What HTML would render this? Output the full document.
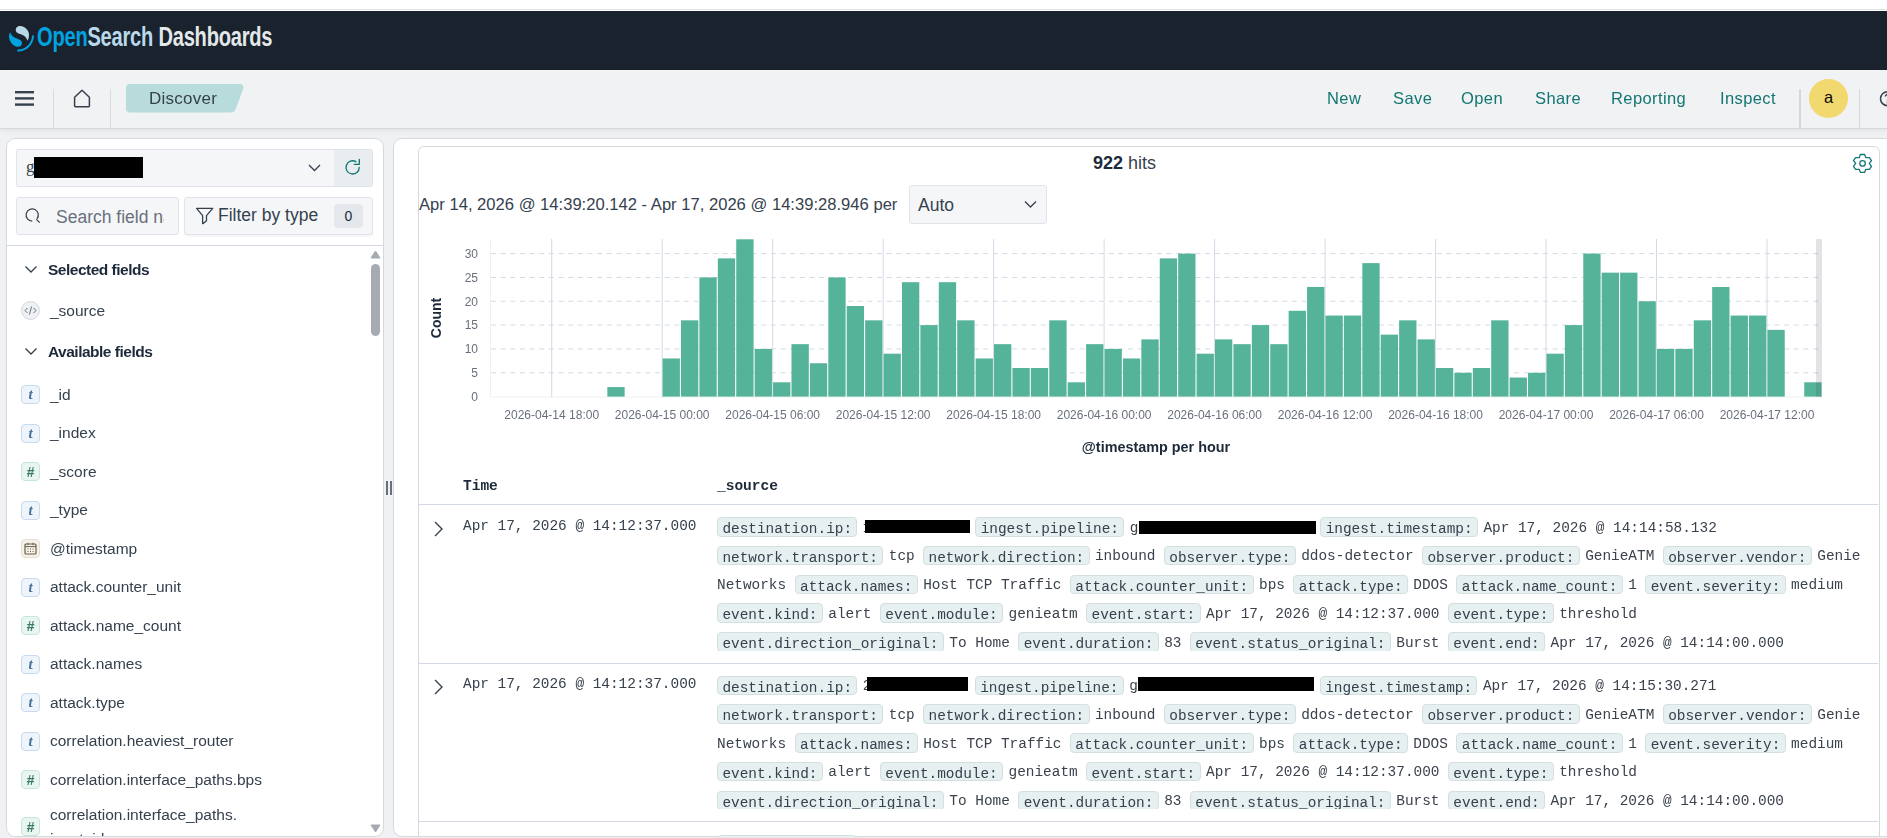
<!DOCTYPE html>
<html><head><meta charset="utf-8">
<style>
*{box-sizing:border-box;margin:0;padding:0}
html,body{width:1887px;height:838px;overflow:hidden;background:#f0f1f3;font-family:"Liberation Sans",sans-serif;color:#36414e}
.abs{position:absolute}
.gs{position:absolute;left:0;top:0;width:1887px;height:838px;will-change:transform;pointer-events:none}
#topstrip{left:0;top:0;width:1887px;height:11px;background:#fff;border-bottom:0}
#topline{left:0;top:9px;width:1887px;height:1px;background:#e3e4ea}
#hdr{left:0;top:11px;width:1887px;height:59px;background:#1a222d}
#nav{left:0;top:70px;width:1887px;height:58px;background:#f1f2f4;box-shadow:0 1px 0 #d5d9de,0 2px 5px rgba(55,70,90,.10)}
.sep{position:absolute;width:1px;background:#d8dce2}
.link{position:absolute;top:89px;font-size:16.5px;letter-spacing:0.4px;color:#137673;white-space:nowrap}
.panel{position:absolute;background:#fff;border:1px solid #d5d9de;border-radius:9px;overflow:hidden}
.inp{position:absolute;background:#f5f6f8;border:1px solid #e0e4ea;border-radius:3px}
.fld{position:absolute;left:50px;font-size:15.5px;color:#36414e;white-space:nowrap}
.tok{position:absolute;left:21px;width:19px;height:19px;border-radius:4px;border:1px solid;font-family:"Liberation Serif",serif;font-weight:bold;font-style:italic;font-size:15px;text-align:center;line-height:17.5px}
.tt{background:#eef4fb;border-color:#c9daee;color:#4a7194}
.tn{background:#e8f5f0;border-color:#c6e6da;color:#3d7a63}
.mono{font-family:"Liberation Mono",monospace}
.row{position:absolute;left:717px;height:28.75px;white-space:nowrap;font-family:"Liberation Mono",monospace;font-size:14.42px;color:#3b424c;line-height:19px}
.b{display:inline-block;background:#e6f0f0;border:1px solid #d5dfe0;border-radius:4px;padding:0 4.4px;height:19.5px;line-height:22.5px;margin-right:5.4px;color:#36414e}
.v{margin-right:8.45px;position:relative;top:-1.5px}
.red{display:inline-block;background:#000;height:13px;vertical-align:-1px}
</style></head><body>
<div class="abs" id="topstrip"></div>
<div class="abs" id="topline"></div>
<div class="abs" id="hdr">
  <svg class="abs" style="left:0;top:-11px" width="40" height="60" viewBox="0 0 40 60">
    <path d="M15.8 30.5C15.5 27.5 18 26 20 26.1C25 26.3 29.3 30.5 29 35.4C28.9 37.5 28.3 39.3 27.5 40.7C26.5 37.5 24.5 35.8 21.5 34.6C18.5 33.6 16 32.8 15.8 30.5Z" fill="#b9d9eb"/>
    <path d="M10.1 32.3C8.6 34.5 8.5 38.5 10.5 41.8C12.5 45 15 46.8 17.8 46.8C20.5 46.8 22.2 45 22 42.7C21.8 40.6 19.8 39.6 17.5 38.8C13.8 37.4 11 35.8 10.1 32.3Z" fill="#00a3e0"/>
    <path d="M33 36.2A15.5 15.5 0 0 1 18.2 50.6" stroke="#00a3e0" stroke-width="2" fill="none" stroke-linecap="round"/>
  </svg>
  <div class="abs" style="left:37px;top:10px;font-size:27.5px;font-weight:bold;white-space:nowrap;transform:scaleX(0.73);transform-origin:0 0;letter-spacing:-0.3px"><span style="color:#00a3e0">Open</span><span style="color:#b9d9eb">Search</span> <span style="color:#e3e8ea">Dashboards</span></div>
</div>
<div class="gs"><div class="abs" id="nav">
  <svg class="abs" style="left:15px;top:20px" width="20" height="16" viewBox="0 0 20 16"><rect x="0" y="1" width="19" height="2.4" fill="#36414e"/><rect x="0" y="7.2" width="19" height="2.4" fill="#36414e"/><rect x="0" y="13.4" width="19" height="2.4" fill="#36414e"/></svg>
  <div class="sep" style="left:53px;top:19px;height:39px"></div>
  <svg class="abs" style="left:73px;top:19px" width="18" height="19" viewBox="0 0 18 19"><path d="M1.6 8.2L9 1.2l7.4 7v8.8a0.8 0.8 0 0 1-0.8 0.8H2.4a0.8 0.8 0 0 1-0.8-0.8z" fill="none" stroke="#36414e" stroke-width="1.5" stroke-linejoin="round"/></svg>
  <div class="sep" style="left:110px;top:19px;height:39px"></div>
  <svg class="abs" style="left:126px;top:14px" width="119" height="29" viewBox="0 0 119 29"><path d="M4 0H114a3.5 3.5 0 0 1 3.3 4.6L110 24.5a6 6 0 0 1-5.6 4H4a4 4 0 0 1-4-4V4a4 4 0 0 1 4-4z" fill="#b8dcdc"/></svg>
  <div class="abs" style="left:149px;top:19px;font-size:17px;letter-spacing:0.25px;color:#36414e">Discover</div>
</div>
<div class="link" style="left:1327px">New</div>
<div class="link" style="left:1393px">Save</div>
<div class="link" style="left:1461px">Open</div>
<div class="link" style="left:1535px">Share</div>
<div class="link" style="left:1611px">Reporting</div>
<div class="link" style="left:1720px">Inspect</div>
</div>
<div class="sep" style="left:1799px;top:89px;height:39px;width:1.5px;background:#d4d7dc"></div>
<div class="abs" style="left:1809px;top:79px;width:39px;height:39px;border-radius:50%;background:#f1d86f;text-align:center;line-height:37px;font-size:16.5px;color:#0a0a0a">a</div>
<div class="sep" style="left:1858.5px;top:89px;height:39px;width:1.5px;background:#d4d7dc"></div>
<svg class="abs" style="left:1878px;top:89px" width="20" height="20" viewBox="0 0 20 20"><circle cx="9.5" cy="9.7" r="7" fill="none" stroke="#36414e" stroke-width="1.5"/><path d="M7.3 7.6a2.2 2.2 0 1 1 3.2 2c-0.7 0.4-1 0.8-1 1.5v0.6" fill="none" stroke="#36414e" stroke-width="1.4"/><circle cx="9.5" cy="13.6" r="0.9" fill="#36414e"/></svg>

<!-- left panel -->
<div class="panel" style="left:6px;top:138px;width:378px;height:699px"></div>
<div class="inp" style="left:16px;top:149px;width:318px;height:38px;border-right:0;border-radius:3px 0 0 3px"></div>
<div class="abs" style="left:334px;top:149px;width:39px;height:38px;background:#e9edf0;border:1px solid #e0e4ea;border-left:0;border-radius:0 3px 3px 0"></div>
<div class="abs" style="left:26px;top:157px;font-size:17px;color:#36414e;font-family:'Liberation Serif',serif">g</div>
<div class="abs" style="left:34px;top:157px;width:109px;height:21px;background:#000"></div>
<svg class="abs" style="left:308px;top:164px" width="13" height="8" viewBox="0 0 13 8"><path d="M1 1l5.5 5.5L12 1" fill="none" stroke="#36414e" stroke-width="1.3"/></svg>
<svg class="abs" style="left:340px;top:155px" width="26" height="26" viewBox="340 155 26 26"><path d="M359.2 167.4A6.6 6.6 0 1 1 355.9 161.7" fill="none" stroke="#137673" stroke-width="1.35" stroke-linecap="round"/><path d="M359.3 159.3V164.3H354.3" fill="none" stroke="#137673" stroke-width="1.35" stroke-linecap="round" stroke-linejoin="round"/></svg>
<div class="inp" style="left:16px;top:197px;width:163px;height:38px"></div>
<svg class="abs" style="left:20px;top:200px" width="30" height="30" viewBox="20 200 30 30"><path d="M36.9 218.9A6.1 6.1 0 1 0 32.3 221.1" fill="none" stroke="#36414e" stroke-width="1.25"/><path d="M36.4 219.4l3.3 3.2" stroke="#36414e" stroke-width="1.25"/></svg>
<div class="abs" style="left:56px;top:206.5px;width:108px;overflow:hidden;font-size:17.5px;color:#69707d;white-space:nowrap">Search field names</div>
<div class="inp" style="left:184px;top:197px;width:189px;height:38px;box-shadow:0 2px 2px rgba(0,0,0,.04)"></div>
<svg class="abs" style="left:190px;top:200px" width="30" height="30" viewBox="190 200 30 30"><path d="M196.6 208.4H212.7L206.5 215.6V220.8L203.2 223.6H202.6V215.6Z" fill="none" stroke="#36414e" stroke-width="1.3" stroke-linejoin="round"/></svg>
<div class="abs" style="left:218px;top:205px;font-size:17.5px;color:#36414e;white-space:nowrap">Filter by type</div>
<div class="abs" style="left:334px;top:204px;width:29px;height:24px;background:#e4e8ec;border-radius:4px;text-align:center;line-height:24px;font-size:14px;color:#1d2a3a">0</div>
<div class="abs" style="left:7px;top:245px;width:376px;height:1px;background:#d3dae6"></div>
<!-- scrollbar -->
<svg class="abs" style="left:370px;top:250px" width="11" height="9" viewBox="0 0 11 9"><path d="M5.5 1L10 8H1z" fill="#a6abb2" stroke="#a6abb2" stroke-width="1" stroke-linejoin="round"/></svg>
<div class="abs" style="left:371px;top:264px;width:9px;height:72px;border-radius:5px;background:#a6abb2"></div>
<svg class="abs" style="left:370px;top:824px" width="11" height="9" viewBox="0 0 11 9"><path d="M1 1H10L5.5 8z" fill="#a6abb2" stroke="#a6abb2" stroke-width="1" stroke-linejoin="round"/></svg>
<!-- selected fields -->
<div class="gs">
<svg class="abs" style="left:24px;top:265px" width="14" height="9" viewBox="0 0 14 9"><path d="M1.5 1.5l5.5 5.5 5.5-5.5" fill="none" stroke="#36414e" stroke-width="1.3"/></svg>
<div class="abs" style="left:48px;top:261px;font-size:15.5px;letter-spacing:-0.5px;font-weight:bold;color:#1d2a3a;white-space:nowrap">Selected fields</div>
<div class="abs" style="left:21px;top:301px;width:19px;height:19px;border-radius:50%;background:#eef0f3;border:1px solid #d3d7dd"></div>
<svg class="abs" style="left:24px;top:305px" width="13" height="11" viewBox="0 0 13 11"><path d="M3.5 3L1 5.5 3.5 8M9.5 3L12 5.5 9.5 8M7.6 1.5L5.4 9.5" fill="none" stroke="#69707d" stroke-width="1"/></svg>
<div class="fld" style="top:302px">_source</div>
<svg class="abs" style="left:24px;top:347px" width="14" height="9" viewBox="0 0 14 9"><path d="M1.5 1.5l5.5 5.5 5.5-5.5" fill="none" stroke="#36414e" stroke-width="1.3"/></svg>
<div class="abs" style="left:48px;top:342.5px;font-size:15.5px;letter-spacing:-0.5px;font-weight:bold;color:#1d2a3a;white-space:nowrap">Available fields</div>
<div class="tok tt" style="top:385.0px">t</div>
<div class="fld" style="top:385.7px">_id</div>
<div class="tok tt" style="top:423.5px">t</div>
<div class="fld" style="top:424.2px">_index</div>
<div class="tok tn" style="top:462.0px;font-family:'Liberation Sans';font-style:italic;font-size:14px;line-height:19px">#</div>
<div class="fld" style="top:462.7px">_score</div>
<div class="tok tt" style="top:500.5px">t</div>
<div class="fld" style="top:501.2px">_type</div>
<div class="abs" style="left:21px;top:539.0px;width:19px;height:19px;border-radius:4px;background:#f5f1e8;border:1px solid #e6dfcf"></div><svg class="abs" style="left:24px;top:542.0px" width="13" height="13" viewBox="0 0 13 13"><rect x="1" y="2" width="11" height="10" rx="1" fill="none" stroke="#6b5f4c" stroke-width="1.2"/><path d="M1 4.6h11M4 0.8v2.4M9 0.8v2.4M4 6.5v1M6.5 6.5v1M9 6.5v1M4 9v1M6.5 9v1M9 9v1" stroke="#6b5f4c" stroke-width="1"/></svg>
<div class="fld" style="top:539.7px">@timestamp</div>
<div class="tok tt" style="top:577.5px">t</div>
<div class="fld" style="top:578.2px">attack.counter_unit</div>
<div class="tok tn" style="top:616.0px;font-family:'Liberation Sans';font-style:italic;font-size:14px;line-height:19px">#</div>
<div class="fld" style="top:616.7px">attack.name_count</div>
<div class="tok tt" style="top:654.5px">t</div>
<div class="fld" style="top:655.2px">attack.names</div>
<div class="tok tt" style="top:693.0px">t</div>
<div class="fld" style="top:693.7px">attack.type</div>
<div class="tok tt" style="top:731.5px">t</div>
<div class="fld" style="top:732.2px">correlation.heaviest_router</div>
<div class="tok tn" style="top:770.0px;font-family:'Liberation Sans';font-style:italic;font-size:14px;line-height:19px">#</div>
<div class="fld" style="top:770.7px">correlation.interface_paths.bps</div>
<div class="tok tn" style="top:817.3px;font-family:'Liberation Sans';font-style:italic;font-size:14px;line-height:19px">#</div>
<div class="fld" style="top:805.6px">correlation.interface_paths.</div>
<div class="abs" style="left:7px;top:826px;width:360px;height:10px;overflow:hidden"><div class="fld" style="left:43px;top:3.5px">input_id</div></div>
</div>

<!-- resize handle -->
<div class="abs" style="left:386px;top:481px;width:1.6px;height:14px;background:#69707d"></div>
<div class="abs" style="left:390px;top:481px;width:1.6px;height:14px;background:#69707d"></div>

<!-- right panel -->
<div class="panel" style="left:393px;top:138px;width:1520px;height:699px">
  <div class="abs" style="left:24px;top:7px;width:1462px;height:720px;border:1px solid #d5d9de;border-radius:6px"></div>
</div>
<div class="abs" style="left:1093px;top:153px;font-size:18px;color:#36414e;white-space:nowrap"><b style="color:#1d2a3a">922</b> hits</div>
<svg class="abs" style="left:1848px;top:150px" width="28" height="28" viewBox="1848 150 28 28"><path d="M1860.4 154.5H1864.6L1865.8 157.6H1869.4L1871.5 160.6L1869.3 163.4L1871.5 166.3L1869.4 169.3H1865.8L1864.6 172.4H1860.4L1859.3 169.3H1855.6L1853.5 166.3L1855.7 163.4L1853.5 160.6L1855.6 157.6H1859.3Z" fill="none" stroke="#137673" stroke-width="1.3" stroke-linejoin="round"/><circle cx="1862.55" cy="163.4" r="2.75" fill="none" stroke="#137673" stroke-width="1.3"/></svg>
<div class="abs" style="left:419px;top:194.5px;font-size:16.6px;color:#36414e;white-space:nowrap">Apr 14, 2026 @ 14:39:20.142 - Apr 17, 2026 @ 14:39:28.946 per</div>
<div class="inp" style="left:909px;top:185px;width:138px;height:39px"></div>
<div class="abs" style="left:918px;top:195px;font-size:17.5px;color:#36414e">Auto</div>
<svg class="abs" style="left:1024px;top:200px" width="13" height="9" viewBox="0 0 13 9"><path d="M1 1.5l5.5 5.5L12 1.5" fill="none" stroke="#36414e" stroke-width="1.3"/></svg>

<!-- chart -->
<div class="gs">
<svg class="abs" style="left:0;top:0" width="1887" height="470" viewBox="0 0 1887 470" font-family="Liberation Sans" font-size="12" fill="#69707d">
<line x1="490.5" y1="239" x2="490.5" y2="397" stroke="#eef0f3" stroke-width="1"/>
<line x1="490" y1="397" x2="1822" y2="397" stroke="#eef0f3" stroke-width="1"/>
<text x="478" y="400.90" text-anchor="end">0</text>
<line x1="491" y1="372.77" x2="1822" y2="372.77" stroke="#d3dae6" stroke-width="1" stroke-dasharray="5 4.65"/>
<text x="478" y="377.07" text-anchor="end">5</text>
<line x1="491" y1="348.93" x2="1822" y2="348.93" stroke="#d3dae6" stroke-width="1" stroke-dasharray="5 4.65"/>
<text x="478" y="353.23" text-anchor="end">10</text>
<line x1="491" y1="325.10" x2="1822" y2="325.10" stroke="#d3dae6" stroke-width="1" stroke-dasharray="5 4.65"/>
<text x="478" y="329.40" text-anchor="end">15</text>
<line x1="491" y1="301.26" x2="1822" y2="301.26" stroke="#d3dae6" stroke-width="1" stroke-dasharray="5 4.65"/>
<text x="478" y="305.56" text-anchor="end">20</text>
<line x1="491" y1="277.43" x2="1822" y2="277.43" stroke="#d3dae6" stroke-width="1" stroke-dasharray="5 4.65"/>
<text x="478" y="281.73" text-anchor="end">25</text>
<line x1="491" y1="253.59" x2="1822" y2="253.59" stroke="#d3dae6" stroke-width="1" stroke-dasharray="5 4.65"/>
<text x="478" y="257.89" text-anchor="end">30</text>
<line x1="551.70" y1="239" x2="551.70" y2="397" stroke="#d3dae6" stroke-width="1"/>
<text x="551.70" y="418.5" text-anchor="middle">2026-04-14 18:00</text>
<line x1="662.18" y1="239" x2="662.18" y2="397" stroke="#d3dae6" stroke-width="1"/>
<text x="662.18" y="418.5" text-anchor="middle">2026-04-15 00:00</text>
<line x1="772.67" y1="239" x2="772.67" y2="397" stroke="#d3dae6" stroke-width="1"/>
<text x="772.67" y="418.5" text-anchor="middle">2026-04-15 06:00</text>
<line x1="883.15" y1="239" x2="883.15" y2="397" stroke="#d3dae6" stroke-width="1"/>
<text x="883.15" y="418.5" text-anchor="middle">2026-04-15 12:00</text>
<line x1="993.64" y1="239" x2="993.64" y2="397" stroke="#d3dae6" stroke-width="1"/>
<text x="993.64" y="418.5" text-anchor="middle">2026-04-15 18:00</text>
<line x1="1104.12" y1="239" x2="1104.12" y2="397" stroke="#d3dae6" stroke-width="1"/>
<text x="1104.12" y="418.5" text-anchor="middle">2026-04-16 00:00</text>
<line x1="1214.60" y1="239" x2="1214.60" y2="397" stroke="#d3dae6" stroke-width="1"/>
<text x="1214.60" y="418.5" text-anchor="middle">2026-04-16 06:00</text>
<line x1="1325.09" y1="239" x2="1325.09" y2="397" stroke="#d3dae6" stroke-width="1"/>
<text x="1325.09" y="418.5" text-anchor="middle">2026-04-16 12:00</text>
<line x1="1435.57" y1="239" x2="1435.57" y2="397" stroke="#d3dae6" stroke-width="1"/>
<text x="1435.57" y="418.5" text-anchor="middle">2026-04-16 18:00</text>
<line x1="1546.06" y1="239" x2="1546.06" y2="397" stroke="#d3dae6" stroke-width="1"/>
<text x="1546.06" y="418.5" text-anchor="middle">2026-04-17 00:00</text>
<line x1="1656.54" y1="239" x2="1656.54" y2="397" stroke="#d3dae6" stroke-width="1"/>
<text x="1656.54" y="418.5" text-anchor="middle">2026-04-17 06:00</text>
<line x1="1767.02" y1="239" x2="1767.02" y2="397" stroke="#d3dae6" stroke-width="1"/>
<text x="1767.02" y="418.5" text-anchor="middle">2026-04-17 12:00</text>
<g fill="#54b399">
<rect x="607.34" y="387.07" width="17.31" height="9.53"/>
<rect x="662.58" y="358.46" width="17.31" height="38.14"/>
<rect x="681.00" y="320.33" width="17.31" height="76.27"/>
<rect x="699.41" y="277.43" width="17.31" height="119.18"/>
<rect x="717.83" y="258.36" width="17.31" height="138.24"/>
<rect x="736.24" y="239.29" width="17.31" height="157.31"/>
<rect x="754.65" y="348.93" width="17.31" height="47.67"/>
<rect x="773.07" y="382.30" width="17.31" height="14.30"/>
<rect x="791.48" y="344.16" width="17.31" height="52.44"/>
<rect x="809.90" y="363.23" width="17.31" height="33.37"/>
<rect x="828.31" y="277.43" width="17.31" height="119.18"/>
<rect x="846.72" y="306.03" width="17.31" height="90.57"/>
<rect x="865.14" y="320.33" width="17.31" height="76.27"/>
<rect x="883.55" y="353.70" width="17.31" height="42.90"/>
<rect x="901.97" y="282.19" width="17.31" height="114.41"/>
<rect x="920.38" y="325.10" width="17.31" height="71.51"/>
<rect x="938.79" y="282.19" width="17.31" height="114.41"/>
<rect x="957.21" y="320.33" width="17.31" height="76.27"/>
<rect x="975.62" y="358.46" width="17.31" height="38.14"/>
<rect x="994.04" y="344.16" width="17.31" height="52.44"/>
<rect x="1012.45" y="368.00" width="17.31" height="28.60"/>
<rect x="1030.86" y="368.00" width="17.31" height="28.60"/>
<rect x="1049.28" y="320.33" width="17.31" height="76.27"/>
<rect x="1067.69" y="382.30" width="17.31" height="14.30"/>
<rect x="1086.11" y="344.16" width="17.31" height="52.44"/>
<rect x="1104.52" y="348.93" width="17.31" height="47.67"/>
<rect x="1122.93" y="358.46" width="17.31" height="38.14"/>
<rect x="1141.35" y="339.40" width="17.31" height="57.20"/>
<rect x="1159.76" y="258.36" width="17.31" height="138.24"/>
<rect x="1178.18" y="253.59" width="17.31" height="143.01"/>
<rect x="1196.59" y="353.70" width="17.31" height="42.90"/>
<rect x="1215.00" y="339.40" width="17.31" height="57.20"/>
<rect x="1233.42" y="344.16" width="17.31" height="52.44"/>
<rect x="1251.83" y="325.10" width="17.31" height="71.51"/>
<rect x="1270.25" y="344.16" width="17.31" height="52.44"/>
<rect x="1288.66" y="310.79" width="17.31" height="85.81"/>
<rect x="1307.07" y="286.96" width="17.31" height="109.64"/>
<rect x="1325.49" y="315.56" width="17.31" height="81.04"/>
<rect x="1343.90" y="315.56" width="17.31" height="81.04"/>
<rect x="1362.32" y="263.12" width="17.31" height="133.48"/>
<rect x="1380.73" y="334.63" width="17.31" height="61.97"/>
<rect x="1399.14" y="320.33" width="17.31" height="76.27"/>
<rect x="1417.56" y="339.40" width="17.31" height="57.20"/>
<rect x="1435.97" y="368.00" width="17.31" height="28.60"/>
<rect x="1454.39" y="372.77" width="17.31" height="23.84"/>
<rect x="1472.80" y="368.00" width="17.31" height="28.60"/>
<rect x="1491.21" y="320.33" width="17.31" height="76.27"/>
<rect x="1509.63" y="377.53" width="17.31" height="19.07"/>
<rect x="1528.04" y="372.77" width="17.31" height="23.84"/>
<rect x="1546.46" y="353.70" width="17.31" height="42.90"/>
<rect x="1564.87" y="325.10" width="17.31" height="71.51"/>
<rect x="1583.28" y="253.59" width="17.31" height="143.01"/>
<rect x="1601.70" y="272.66" width="17.31" height="123.94"/>
<rect x="1620.11" y="272.66" width="17.31" height="123.94"/>
<rect x="1638.53" y="301.26" width="17.31" height="95.34"/>
<rect x="1656.94" y="348.93" width="17.31" height="47.67"/>
<rect x="1675.35" y="348.93" width="17.31" height="47.67"/>
<rect x="1693.77" y="320.33" width="17.31" height="76.27"/>
<rect x="1712.18" y="286.96" width="17.31" height="109.64"/>
<rect x="1730.60" y="315.56" width="17.31" height="81.04"/>
<rect x="1749.01" y="315.56" width="17.31" height="81.04"/>
<rect x="1767.42" y="329.86" width="17.31" height="66.74"/>
<rect x="1804.25" y="382.30" width="17.31" height="14.30"/>
</g>
<rect x="1816" y="239" width="6" height="158" fill="#36414e" fill-opacity="0.15"/>
<text transform="translate(441 318) rotate(-90)" text-anchor="middle" font-weight="bold" font-size="14" fill="#1d2a3a">Count</text>
<text x="1156" y="452" text-anchor="middle" font-weight="bold" font-size="14.4" fill="#1d2a3a">@timestamp per hour</text>
</svg>

</div>
<!-- table -->
<div class="gs">
<div class="abs mono" style="left:463px;top:478px;font-size:14.5px;font-weight:bold;color:#1d2a3a">Time</div>
<div class="abs mono" style="left:717px;top:478px;font-size:14.5px;font-weight:bold;color:#1d2a3a">_source</div>
<div class="abs" style="left:419px;top:504px;width:1459px;height:1px;background:#d3dae6"></div>
<svg class="abs" style="left:433px;top:520.5px" width="11" height="16" viewBox="0 0 11 16"><path d="M2 1l7 7-7 7" fill="none" stroke="#36414e" stroke-width="1.4"/></svg>
<div class="abs mono" style="left:463px;top:517.5px;font-size:14.42px;color:#36414e;white-space:nowrap">Apr 17, 2026 @ 14:12:37.000</div>
<div class="abs" style="left:717px;top:517.0px;width:1160px;height:133.5px;overflow:hidden">
<div class="row" style="left:0;top:0.00px"><span class="b">destination.ip:</span><span class="v" style="display:inline-block;width:104px">1</span><span class="b">ingest.pipeline:</span><span class="v" style="display:inline-block;width:182px">g</span><span class="b">ingest.timestamp:</span><span class="v">Apr 17, 2026 @ 14:14:58.132</span></div>
<div class="row" style="left:0;top:28.75px"><span class="b">network.transport:</span><span class="v">tcp</span><span class="b">network.direction:</span><span class="v">inbound</span><span class="b">observer.type:</span><span class="v">ddos-detector</span><span class="b">observer.product:</span><span class="v">GenieATM</span><span class="b">observer.vendor:</span><span class="v">Genie</span></div>
<div class="row" style="left:0;top:57.50px"><span class="v">Networks</span><span class="b">attack.names:</span><span class="v">Host TCP Traffic</span><span class="b">attack.counter_unit:</span><span class="v">bps</span><span class="b">attack.type:</span><span class="v">DDOS</span><span class="b">attack.name_count:</span><span class="v">1</span><span class="b">event.severity:</span><span class="v">medium</span></div>
<div class="row" style="left:0;top:86.25px"><span class="b">event.kind:</span><span class="v">alert</span><span class="b">event.module:</span><span class="v">genieatm</span><span class="b">event.start:</span><span class="v">Apr 17, 2026 @ 14:12:37.000</span><span class="b">event.type:</span><span class="v">threshold</span></div>
<div class="row" style="left:0;top:115.00px"><span class="b">event.direction_original:</span><span class="v">To Home</span><span class="b">event.duration:</span><span class="v">83</span><span class="b">event.status_original:</span><span class="v">Burst</span><span class="b">event.end:</span><span class="v">Apr 17, 2026 @ 14:14:00.000</span></div>
</div>
<div class="abs" style="left:419px;top:662.7px;width:1459px;height:1px;background:#d3dae6"></div>
<svg class="abs" style="left:433px;top:679.0px" width="11" height="16" viewBox="0 0 11 16"><path d="M2 1l7 7-7 7" fill="none" stroke="#36414e" stroke-width="1.4"/></svg>
<div class="abs mono" style="left:463px;top:676.0px;font-size:14.42px;color:#36414e;white-space:nowrap">Apr 17, 2026 @ 14:12:37.000</div>
<div class="abs" style="left:717px;top:675.5px;width:1160px;height:133.5px;overflow:hidden">
<div class="row" style="left:0;top:0.00px"><span class="b">destination.ip:</span><span class="v" style="display:inline-block;width:103.5px">2</span><span class="b">ingest.pipeline:</span><span class="v" style="display:inline-block;width:182px">g</span><span class="b">ingest.timestamp:</span><span class="v">Apr 17, 2026 @ 14:15:30.271</span></div>
<div class="row" style="left:0;top:28.75px"><span class="b">network.transport:</span><span class="v">tcp</span><span class="b">network.direction:</span><span class="v">inbound</span><span class="b">observer.type:</span><span class="v">ddos-detector</span><span class="b">observer.product:</span><span class="v">GenieATM</span><span class="b">observer.vendor:</span><span class="v">Genie</span></div>
<div class="row" style="left:0;top:57.50px"><span class="v">Networks</span><span class="b">attack.names:</span><span class="v">Host TCP Traffic</span><span class="b">attack.counter_unit:</span><span class="v">bps</span><span class="b">attack.type:</span><span class="v">DDOS</span><span class="b">attack.name_count:</span><span class="v">1</span><span class="b">event.severity:</span><span class="v">medium</span></div>
<div class="row" style="left:0;top:86.25px"><span class="b">event.kind:</span><span class="v">alert</span><span class="b">event.module:</span><span class="v">genieatm</span><span class="b">event.start:</span><span class="v">Apr 17, 2026 @ 14:12:37.000</span><span class="b">event.type:</span><span class="v">threshold</span></div>
<div class="row" style="left:0;top:115.00px"><span class="b">event.direction_original:</span><span class="v">To Home</span><span class="b">event.duration:</span><span class="v">83</span><span class="b">event.status_original:</span><span class="v">Burst</span><span class="b">event.end:</span><span class="v">Apr 17, 2026 @ 14:14:00.000</span></div>
</div>
<div class="abs" style="left:419px;top:821.2px;width:1459px;height:1px;background:#d3dae6"></div>
<div class="abs" style="left:865px;top:520.1px;width:105.0px;height:12.7px;background:#000"></div>
<div class="abs" style="left:1138.9px;top:520.9px;width:177.2px;height:13.0px;background:#000"></div>
<div class="abs" style="left:867.1px;top:677px;width:100.9px;height:13.8px;background:#000"></div>
<div class="abs" style="left:1137.8px;top:676.9px;width:176.4px;height:13.9px;background:#000"></div>
<div class="abs" style="left:717px;top:834.5px;height:20px;white-space:nowrap;font-family:'Liberation Mono',monospace;font-size:14.42px"><span class="b">destination.ip:</span></div>
</div>
</body></html>
